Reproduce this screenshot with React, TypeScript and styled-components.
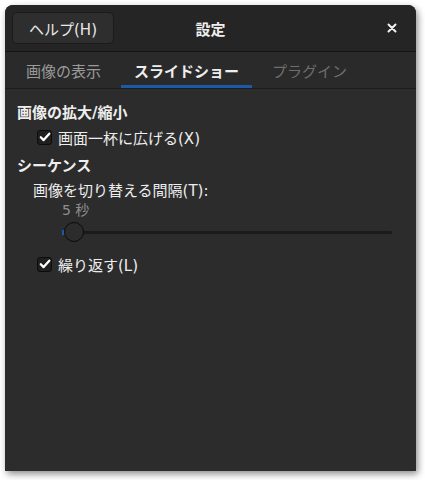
import React from "react";
import styled, { createGlobalStyle } from "styled-components";

const Global = createGlobalStyle`
  html, body { margin: 0; padding: 0; background: #ffffff; }
  body { font-family: "DejaVu Sans", "Noto Sans CJK JP", sans-serif; }
`;

const Page = styled.div`
  width: 425px;
  height: 480px;
  padding: 5px 0 0 5px;
  box-sizing: border-box;
`;

const Window = styled.div`
  width: 411px;
  height: 466px;
  background: #2c2c2c;
  border-radius: 8px 8px 0 0;
  box-shadow: 2px 3px 7px rgba(0, 0, 0, 0.45);
  display: flex;
  flex-direction: column;
  overflow: hidden;
  color: #eeeeee;
  font-size: 15px;
`;

const Header = styled.div`
  height: 46px;
  background: #252525;
  border-bottom: 1px solid #151515;
  display: grid;
  grid-template-columns: 1fr auto 1fr;
  align-items: center;
  padding: 0 7px;
`;

const HelpButton = styled.button`
  justify-self: start;
  width: 102px;
  height: 32px;
  border-radius: 5px;
  background: #2e2e2e;
  border: 1px solid #1b1b1b;
  color: #e8e8e8;
  font-family: inherit;
  font-size: 15px;
  padding: 0;
`;

const Title = styled.div`
  font-weight: bold;
  font-size: 15px;
  color: #eeeeee;
`;

const Close = styled.div`
  justify-self: end;
  width: 22px;
  margin-right: 6px;
  display: flex;
  justify-content: center;
`;

const Tabs = styled.div`
  height: 36px;
  border-bottom: 1px solid #1d1d1d;
  background: #2a2a2a;
  display: flex;
  gap: 7px;
  padding-left: 8px;
`;

const Tab = styled.div<{ $state: "on" | "off" | "dim" }>`
  padding: 0 13px;
  display: flex;
  align-items: center;
  font-size: 15px;
  font-weight: ${(p) => (p.$state === "on" ? "bold" : "normal")};
  color: ${(p) => (p.$state === "on" ? "#eeeeee" : p.$state === "off" ? "#9a9a9a" : "#6e6e6e")};
  box-shadow: ${(p) => (p.$state === "on" ? "inset 0 -3px 0 #1b5aa8" : "none")};
`;

const Body = styled.div`
  padding: 11px 12px 0 12px;
  display: flex;
  flex-direction: column;
`;

const Section = styled.div<{ $h: number }>`
  font-weight: bold;
  font-size: 15px;
  height: ${(p) => p.$h}px;
  display: flex;
  align-items: center;
`;

const CheckRow = styled.label<{ $h: number }>`
  display: flex;
  align-items: center;
  gap: 6px;
  height: ${(p) => p.$h}px;
  padding-left: 20px;
  font-size: 15px;
`;

const Box = styled.span`
  width: 15px;
  height: 15px;
  border-radius: 3px;
  background: #1f1f1f;
  border: 1px solid #0c0c0c;
  box-sizing: border-box;
  display: flex;
  align-items: center;
  justify-content: center;
`;

const Label = styled.div`
  padding-left: 16px;
  height: 26px;
  display: flex;
  align-items: center;
  font-size: 15px;
`;

const Value = styled.div`
  padding-left: 45px;
  height: 14px;
  display: flex;
  align-items: center;
  font-size: 14px;
  color: #8e8e8e;
`;

const SliderRow = styled.div`
  padding: 0 12px 0 45px;
  height: 32px;
  display: flex;
  align-items: center;
`;

const Trough = styled.div`
  flex: 1;
  height: 3px;
  background: #1b1b1b;
  border-radius: 2px;
  position: relative;
`;

const Fill = styled.div`
  position: absolute;
  left: 0;
  top: -1px;
  width: 4px;
  height: 5px;
  background: #1b5aa8;
`;

const Knob = styled.div`
  position: absolute;
  left: 2px;
  top: -9px;
  width: 20px;
  height: 20px;
  border-radius: 50%;
  background: #2c2c2c;
  border: 1px solid #0a0a0a;
  box-sizing: border-box;
`;

const Check = () => (
  <svg width="12" height="12" viewBox="0 0 12 12">
    <path d="M1.8 6.3 L4.6 9.1 L10.3 2.7" fill="none" stroke="#ffffff" strokeWidth="2.3" strokeLinecap="round" strokeLinejoin="round" />
  </svg>
);

export default function App() {
  return (
    <Page>
      <Global />
      <Window>
        <Header>
          <HelpButton>ヘルプ(H)</HelpButton>
          <Title>設定</Title>
          <Close>
            <svg width="10" height="10" viewBox="0 0 10 10">
              <path d="M1.5 1.5 L8.5 8.5 M8.5 1.5 L1.5 8.5" stroke="#f2f2f2" strokeWidth="2" strokeLinecap="round" />
            </svg>
          </Close>
        </Header>
        <Tabs>
          <Tab $state="off">画像の表示</Tab>
          <Tab $state="on">スライドショー</Tab>
          <Tab $state="dim">プラグイン</Tab>
        </Tabs>
        <Body>
          <Section $h={22}>画像の拡大/縮小</Section>
          <CheckRow $h={30}>
            <Box><Check /></Box>
            画面一杯に広げる(X)
          </CheckRow>
          <Section $h={24}>シーケンス</Section>
          <Label>画像を切り替える間隔(T):</Label>
          <Value>5 秒</Value>
          <SliderRow>
            <Trough>
              <Fill />
              <Knob />
            </Trough>
          </SliderRow>
          <CheckRow $h={32}>
            <Box><Check /></Box>
            繰り返す(L)
          </CheckRow>
        </Body>
      </Window>
    </Page>
  );
}
